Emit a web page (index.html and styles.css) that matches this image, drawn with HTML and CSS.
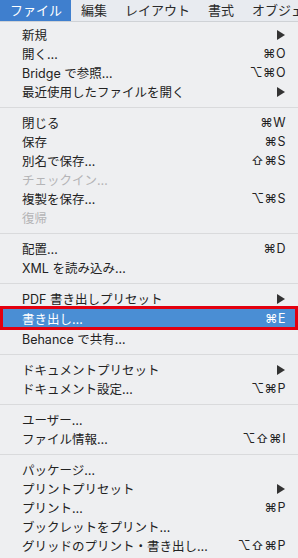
FILE: index.html
```html
<!DOCTYPE html>
<html lang="ja">
<head>
  <meta charset="UTF-8">
  <title>ファイル メニュー</title>
  <link rel="stylesheet" href="styles.css">
</head>
<body>
  <div class="menubar">
    <span class="top active">ファイル</span>
    <span class="top">編集</span>
    <span class="top">レイアウト</span>
    <span class="top">書式</span>
    <span class="top">オブジェクト</span>
  </div>

  <ul class="menu">
    <li class="item"><span class="label">新規</span><span class="arrow"></span></li>
    <li class="item"><span class="label">開く…</span><span class="key">⌘O</span></li>
    <li class="item"><span class="label">Bridge で参照…</span><span class="key">⌥⌘O</span></li>
    <li class="item"><span class="label">最近使用したファイルを開く</span><span class="arrow"></span></li>
    <li class="sep"></li>
    <li class="item"><span class="label">閉じる</span><span class="key">⌘W</span></li>
    <li class="item"><span class="label">保存</span><span class="key">⌘S</span></li>
    <li class="item"><span class="label">別名で保存…</span><span class="key">⇧⌘S</span></li>
    <li class="item disabled"><span class="label">チェックイン…</span></li>
    <li class="item"><span class="label">複製を保存…</span><span class="key">⌥⌘S</span></li>
    <li class="item disabled"><span class="label">復帰</span></li>
    <li class="sep"></li>
    <li class="item"><span class="label">配置…</span><span class="key">⌘D</span></li>
    <li class="item"><span class="label">XML を読み込み…</span></li>
    <li class="sep"></li>
    <li class="item"><span class="label">PDF 書き出しプリセット</span><span class="arrow"></span></li>
    <li class="item selected"><span class="label">書き出し…</span><span class="key">⌘E</span></li>
    <li class="item"><span class="label">Behance で共有…</span></li>
    <li class="sep"></li>
    <li class="item"><span class="label">ドキュメントプリセット</span><span class="arrow"></span></li>
    <li class="item"><span class="label">ドキュメント設定…</span><span class="key">⌥⌘P</span></li>
    <li class="sep"></li>
    <li class="item"><span class="label">ユーザー…</span></li>
    <li class="item"><span class="label">ファイル情報…</span><span class="key">⌥⇧⌘I</span></li>
    <li class="sep"></li>
    <li class="item"><span class="label">パッケージ…</span></li>
    <li class="item"><span class="label">プリントプリセット</span><span class="arrow"></span></li>
    <li class="item"><span class="label">プリント…</span><span class="key">⌘P</span></li>
    <li class="item"><span class="label">ブックレットをプリント…</span></li>
    <li class="item"><span class="label">グリッドのプリント・書き出し…</span><span class="key">⌥⇧⌘P</span></li>
  </ul>
</body>
</html>
```

FILE: styles.css
```css
body {
  margin: 0;
  width: 298px;
  height: 558px;
  overflow: hidden;
  background-color: #eeeff1;
  font-family: Inter, "Noto Sans CJK JP", sans-serif;
  color: #222222;
}

/* menu bar */
.menubar {
  display: flex;
  height: 21px;
  overflow: hidden;
  white-space: nowrap;
  background-color: #e8ebf0;
  border-bottom: 1px solid #cfd2d6;
}

.top {
  padding: 0 8px 0 10px;
  line-height: 21px;
  font-size: 13px;
  color: #2a2a2a;
}

.top.active {
  padding-right: 9px;
  background-color: #3f7fce;
  color: #ffffff;
}

/* dropdown */
.menu {
  list-style: none;
  margin: 0;
  padding: 3px 0 0 0;
  font-size: 12.5px;
}

.item {
  display: flex;
  align-items: center;
  height: 19px;
  padding: 0 12px 0 22px;
  white-space: nowrap;
}

.label {
  flex: 1;
}

.key {
  letter-spacing: 0.5px;
}

.arrow {
  width: 0;
  height: 0;
  margin-right: 1px;
  border-top: 5px solid transparent;
  border-bottom: 5px solid transparent;
  border-left: 8px solid #333333;
}

.disabled {
  color: #b4b4b6;
}

.sep {
  height: 12px;
  display: flex;
  align-items: center;
}

.sep::before {
  content: "";
  flex: 1;
  height: 1px;
  background-color: #d9dadc;
}

/* highlighted row, framed in red */
.selected {
  height: 18px;
  margin: -2px 0 -1px;
  padding: 0 9px 0 19px;
  background-color: #4a8ed4;
  color: #ffffff;
  border: 3px solid #e2000f;
}
```
